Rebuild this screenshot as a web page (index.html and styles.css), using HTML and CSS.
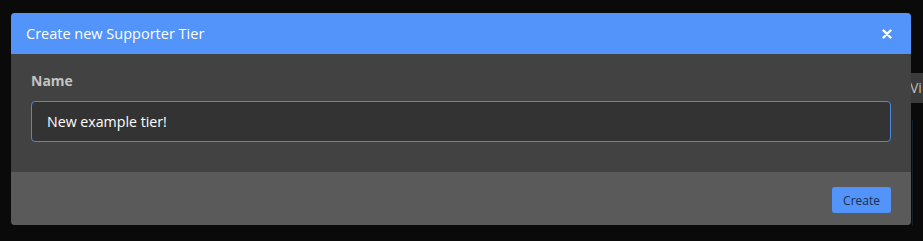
FILE: index.html
```html
<!DOCTYPE html>
<html lang="en">
<head>
    <meta charset="UTF-8">
    <meta name="viewport" content="width=device-width, initial-scale=1.0">
    <title>Create new Supporter Tier</title>
    <link rel="stylesheet" href="styles.css">
</head>
<body>
    <!-- page behind the overlay -->
    <div class="backdrop">
        <span class="peek-btn">Vi</span>
        <span class="peek-line"></span>
    </div>

    <div class="modal">
        <header class="modal-head">
            <h1>Create new Supporter Tier</h1>
            <button class="close-btn" aria-label="Close">
                <svg width="10" height="10" viewBox="0 0 10 10">
                    <path d="M1.5 1.5 L8.5 8.5 M8.5 1.5 L1.5 8.5" stroke="#fff" stroke-width="2.4" stroke-linecap="round"/>
                </svg>
            </button>
        </header>
        <div class="modal-body">
            <label for="tier-name">Name</label>
            <input type="text" id="tier-name" value="New example tier!">
        </div>
        <footer class="modal-foot">
            <button class="create-btn">Create</button>
        </footer>
    </div>
</body>
</html>
```

FILE: styles.css
```css
* {
    margin: 0;
    padding: 0;
    box-sizing: border-box;
    font-family: 'Open Sans', 'Noto Sans', sans-serif;
}

body {
    background-color: #0a0a0a;
    width: 923px;
    height: 241px;
    overflow: hidden;
    position: relative;
}

.backdrop .peek-btn {
    position: absolute;
    left: 900px;
    top: 73px;
    width: 23px;
    height: 30px;
    line-height: 30px;
    padding-left: 10px;
    background-color: #3b3b3b;
    color: #bdbdbd;
    font-size: 14px;
    white-space: nowrap;
    overflow: hidden;
}

.backdrop .peek-line {
    position: absolute;
    left: 912px;
    top: 120px;
    width: 1px;
    height: 106px;
    background-color: #10222a;
}

.modal {
    position: absolute;
    left: 11px;
    top: 13px;
    width: 900px;
    border-radius: 4px;
    overflow: hidden;
    background-color: #424242;
}

.modal-head {
    display: flex;
    align-items: center;
    justify-content: space-between;
    height: 41px;
    padding: 0 19px 0 15px;
    background-color: #5294fa;
}

.modal-head h1 {
    font-size: 14.5px;
    font-weight: normal;
    color: #ffffff;
}

.close-btn {
    background: none;
    border: none;
    display: flex;
    cursor: pointer;
}

.modal-body {
    display: flex;
    flex-direction: column;
    padding: 17px 20px 30px;
}

.modal-body label {
    font-size: 14px;
    font-weight: bold;
    color: #c4c4c4;
    line-height: 20px;
    margin-bottom: 10px;
}

#tier-name {
    height: 41px;
    padding: 0 15px;
    background-color: #333333;
    border: 1px solid #4f86dc;
    border-radius: 4px;
    color: #ffffff;
    font-size: 14.2px;
    outline: none;
}

.modal-foot {
    display: flex;
    justify-content: flex-end;
    padding: 15px 20px 12px;
    background-color: #5a5a5a;
}

.create-btn {
    height: 26px;
    padding: 0 11px;
    background-color: #5294fa;
    color: #1b2d4a;
    border: none;
    border-radius: 3px;
    font-size: 12px;
    cursor: pointer;
}
```
